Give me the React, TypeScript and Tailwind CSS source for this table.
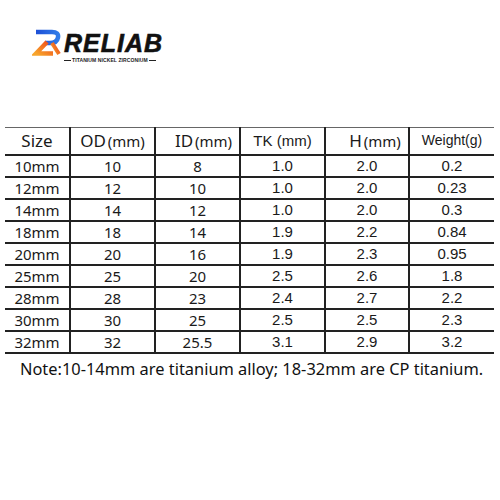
const rows = [
  ["10mm", "10", "8", "1.0", "2.0", "0.2"],
  ["12mm", "12", "10", "1.0", "2.0", "0.23"],
  ["14mm", "14", "12", "1.0", "2.0", "0.3"],
  ["18mm", "18", "14", "1.9", "2.2", "0.84"],
  ["20mm", "20", "16", "1.9", "2.3", "0.95"],
  ["25mm", "25", "20", "2.5", "2.6", "1.8"],
  ["28mm", "28", "23", "2.4", "2.7", "2.2"],
  ["30mm", "30", "25", "2.5", "2.5", "2.3"],
  ["32mm", "32", "25.5", "3.1", "2.9", "3.2"],
];

const widths = ["w-[65px]", "w-[85px]", "w-[85px]", "w-[85px]", "w-[84px]", "w-[85px]"];
const fonts = [
  "font-['Noto_Sans',sans-serif]",
  "font-['Noto_Sans',sans-serif]",
  "font-['Noto_Sans',sans-serif]",
  "font-['Liberation_Sans',Arial,sans-serif]",
  "font-['Liberation_Sans',Arial,sans-serif]",
  "font-['Liberation_Sans',Arial,sans-serif]",
];

const Logo = () => (
  <div className="flex items-start gap-[2px]">
    <svg width="30" height="28" viewBox="0 0 30 28">
      <defs>
        <linearGradient id="blue" x1="0" y1="0" x2="1" y2="0">
          <stop offset="0%" stopColor="#1d4fd6" />
          <stop offset="100%" stopColor="#2f7be8" />
        </linearGradient>
        <linearGradient id="orange" x1="0" y1="1" x2="1" y2="0">
          <stop offset="0%" stopColor="#f7a52c" />
          <stop offset="100%" stopColor="#ee4318" />
        </linearGradient>
      </defs>
      <path d="M4 3 H20 Q27 3 26 8.5 Q25 14 18 14 H13" fill="none" stroke="url(#blue)" strokeWidth="4.5" strokeLinejoin="round" />
      <path d="M15 13 L4 24.5 H21" fill="none" stroke="url(#orange)" strokeWidth="4.5" strokeLinejoin="miter" />
      <path d="M20 14 L27 25" fill="none" stroke="url(#orange)" strokeWidth="4" />
    </svg>
    <div className="flex flex-col">
      <div className="font-['Liberation_Sans',Arial,sans-serif] font-bold italic text-[25px] leading-[24px] tracking-[1px] text-[#111] mt-[2px] [-webkit-text-stroke:0.6px_#111]">
        RELIAB
      </div>
      <div className="flex items-center gap-[1px] mt-[2px]">
        <div className="h-[1px] w-[7px] bg-[#222]" />
        <div className="font-['Liberation_Sans',Arial,sans-serif] font-bold text-[5px] leading-[6px] text-[#222] tracking-[0.1px]">
          TITANIUM NICKEL ZIRCONIUM
        </div>
        <div className="h-[1px] w-[7px] bg-[#222]" />
      </div>
    </div>
  </div>
);

export default function App() {
  return (
    <div className="w-[500px] h-[500px] bg-white overflow-hidden">
      <div className="pt-[29px] pl-[32px]">
        <Logo />
      </div>
      <table className="ml-[5px] mt-[64px] border-collapse text-[#1a1a1a] text-center">
        <thead>
          <tr className="h-[27px] border-t border-t-[#666] border-b-2 border-b-[#222]">
            <th className={`${widths[0]} font-normal text-[17px] font-['Noto_Sans',sans-serif]`}>Size</th>
            <th className={`${widths[1]} font-normal border-l-2 border-[#222] font-['Noto_Sans',sans-serif]`}>
              <span className="text-[17px]">OD</span>
              <span className="text-[15px] ml-[2px]">(mm)</span>
            </th>
            <th className={`${widths[2]} font-normal border-l-2 border-[#222] font-['Noto_Sans',sans-serif]`}>
              <span className="text-[17px] ml-[12px]">ID</span>
              <span className="text-[15px] ml-[2px]">(mm)</span>
            </th>
            <th className={`${widths[3]} font-normal border-l-2 border-[#222] text-[15px] font-['Liberation_Sans',Arial,sans-serif]`}>
              TK (mm)
            </th>
            <th className={`${widths[4]} font-normal border-l-2 border-[#222] font-['Noto_Sans',sans-serif]`}>
              <span className="text-[17px] ml-[16px]">H</span>
              <span className="text-[15px] ml-[2px]">(mm)</span>
            </th>
            <th className={`${widths[5]} font-normal border-l-2 border-[#222] text-[14px] font-['Liberation_Sans',Arial,sans-serif]`}>
              Weight(g)
            </th>
          </tr>
        </thead>
        <tbody>
          {rows.map((r) => (
            <tr key={r[0]} className="h-[22px] border-b-2 border-[#222]">
              {r.map((c, i) => (
                <td
                  key={i}
                  className={`${widths[i]} ${fonts[i]} ${i > 0 ? "border-l-2 border-[#222]" : ""} text-[15px] leading-[18px] p-0`}
                >
                  {c}
                </td>
              ))}
            </tr>
          ))}
        </tbody>
      </table>
      <div className="mt-[3px] ml-[20px] font-['Noto_Sans',sans-serif] text-[16.4px] text-[#111] whitespace-nowrap">
        Note:10-14mm are titanium alloy; 18-32mm are CP titanium.
      </div>
    </div>
  );
}
